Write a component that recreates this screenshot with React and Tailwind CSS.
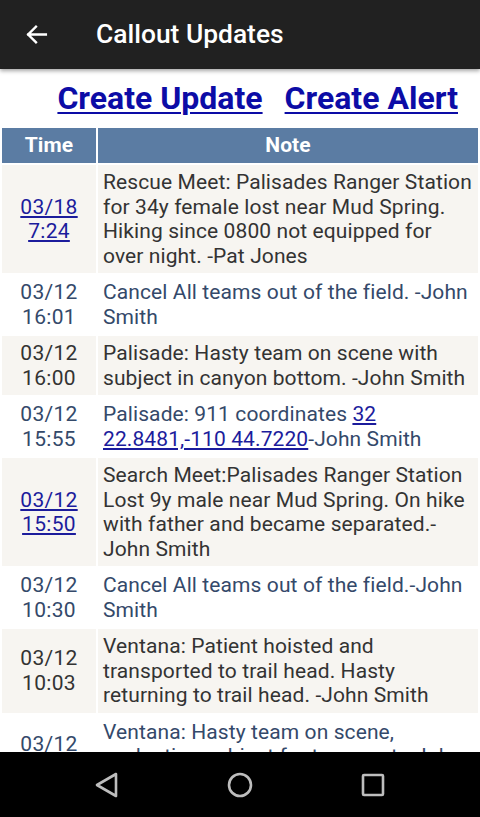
import React from "react";

const rows = [
  {
    d: "03/18",
    t: "7:24",
    link: true,
    note: <>Rescue Meet: Palisades Ranger Station for 34y female lost near Mud Spring. Hiking since 0800 not equipped for over night. -Pat Jones</>,
  },
  { d: "03/12", t: "16:01", note: <>Cancel All teams out of the field. -John Smith</> },
  { d: "03/12", t: "16:00", note: <>Palisade: Hasty team on scene with subject in canyon bottom. -John Smith</> },
  {
    d: "03/12",
    t: "15:55",
    note: (
      <>
        Palisade: 911 coordinates{" "}
        <a href="#" className="underline text-[#1c1c9c]">32 22.8481,-110 44.7220</a>-John Smith
      </>
    ),
  },
  {
    d: "03/12",
    t: "15:50",
    link: true,
    note: <>Search Meet:Palisades Ranger Station Lost 9y male near Mud Spring. On hike with father and became separated.-John Smith</>,
  },
  { d: "03/12", t: "10:30", note: <>Cancel All teams out of the field.-John Smith</> },
  { d: "03/12", t: "10:03", note: <>Ventana: Patient hoisted and transported to trail head. Hasty returning to trail head. -John Smith</> },
  { d: "03/12", t: "09:41", note: <>Ventana: Hasty team on scene, evaluating subject for transport. -John Smith</> },
];

export default function App() {
  return (
    <div className="w-[480px] h-[817px] flex flex-col overflow-hidden bg-white" style={{ fontFamily: "Roboto, 'Noto Sans', sans-serif" }}>
      <div className="h-[69px] shrink-0 bg-[#212121] flex items-center relative z-10 shadow-[0_2px_4px_rgba(0,0,0,0.35)]">
        <svg className="ml-[24px] w-[25px] h-[25px]" viewBox="0 0 24 24" fill="none" stroke="white" strokeWidth="2.3" strokeLinecap="square">
          <path d="M21 12H4M11.5 4.5L4 12l7.5 7.5" />
        </svg>
        <div className="ml-[47px] text-white text-[26.4px] font-medium">Callout Updates</div>
      </div>
      <div className="flex-1 overflow-hidden">
        <div className="h-[57px] flex items-center justify-end pr-[22px] gap-[22px]">
          <a href="#" className="text-[32px] font-bold text-[#0c0ca6] underline decoration-[2px] underline-offset-[3px] leading-none">Create Update</a>
          <a href="#" className="text-[32px] font-bold text-[#0c0ca6] underline decoration-[2px] underline-offset-[3px] leading-none">Create Alert</a>
        </div>
        <table className="w-full border-separate border-spacing-[2px] table-fixed text-[21px] tracking-[0.1px] leading-[24.5px]">
          <thead>
            <tr className="bg-[#5b7ca3] text-white">
              <th className="w-[94px] h-[35px] font-bold text-center py-0">Time</th>
              <th className="h-[35px] font-bold text-center py-0">Note</th>
            </tr>
          </thead>
          <tbody>
            {rows.map((r, i) => {
              const odd = i % 2 === 0;
              return (
                <tr key={i} className={odd ? "bg-[#f7f5f1] text-[#333333]" : "bg-white text-[#34496a]"}>
                  <td className="px-[3px] py-[5px] text-center align-middle tracking-[0.3px]">
                    {r.link ? (
                      <a href="#" className="underline text-[#1c1c9c]">
                        {r.d}
                        <br />
                        {r.t}
                      </a>
                    ) : (
                      <>
                        {r.d}
                        <br />
                        {r.t}
                      </>
                    )}
                  </td>
                  <td className="pl-[5px] pr-[1px] py-[5px] text-left align-middle">{r.note}</td>
                </tr>
              );
            })}
          </tbody>
        </table>
      </div>
      <div className="h-[65px] shrink-0 bg-black flex items-center justify-center">
        <div className="w-[133px] flex justify-center">
          <svg width="26" height="28" viewBox="0 0 26 28" fill="none" stroke="#bdbdbd" strokeWidth="2.6" strokeLinejoin="round">
            <path d="M22 3L3 14l19 11z" />
          </svg>
        </div>
        <div className="w-[133px] flex justify-center">
          <svg width="28" height="28" viewBox="0 0 28 28" fill="none" stroke="#bdbdbd" strokeWidth="2.6">
            <circle cx="14" cy="14" r="11" />
          </svg>
        </div>
        <div className="w-[133px] flex justify-center">
          <svg width="26" height="26" viewBox="0 0 26 26" fill="none" stroke="#bdbdbd" strokeWidth="2.6">
            <rect x="3" y="3" width="20" height="20" rx="1" />
          </svg>
        </div>
      </div>
    </div>
  );
}
